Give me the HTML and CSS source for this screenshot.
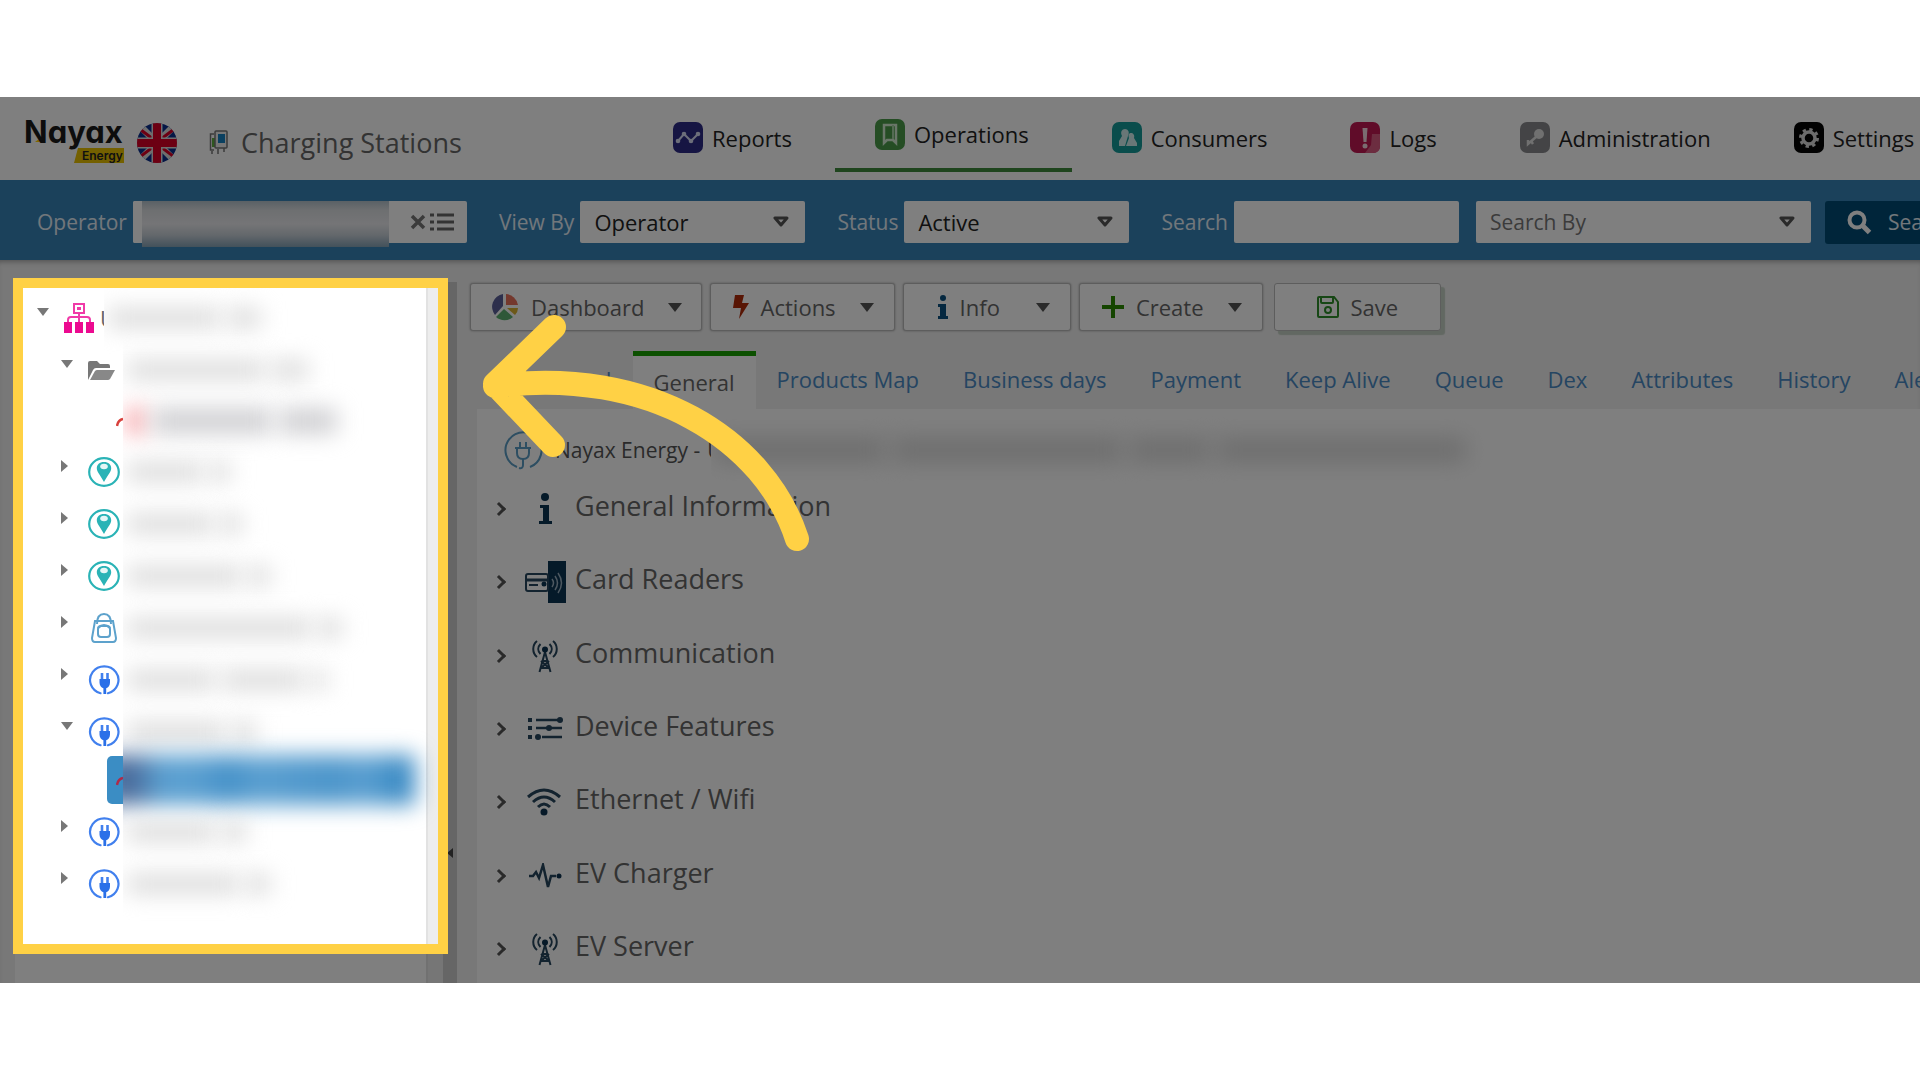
FILE: index.html
```html
<!DOCTYPE html>
<html lang="en">
<head>
  <meta charset="UTF-8">
  <title>Charging Stations</title>
  <link rel="stylesheet" href="styles.css">
</head>
<body>

  <!-- Shared icons -->
  <svg class="sprite" aria-hidden="true">
    <symbol id="pin" viewBox="0 0 32 30">
      <ellipse cx="16" cy="15" rx="14.8" ry="13.8" fill="none" stroke="#2ab3b6" stroke-width="2.2"/>
      <path d="M16 5c-4.500 0-7.200 2.600-7.200 6.200C8.800 15 13 19 16 25c3-6 7.200-10 7.200-13.800C23.200 7.600 20.500 5 16 5z" fill="#2ab3b6"/>
      <ellipse cx="16" cy="9.500" rx="3.800" ry="2.800" fill="#e4f6f6"/>
    </symbol>
    <symbol id="plug" viewBox="0 0 32 30">
      <path d="M12.500 28.200A14.200 13.700 0 1 1 20 28.200" fill="none" stroke="#4180ee" stroke-width="2.200" stroke-linecap="round"/>
      <path d="M11.500 14h10.500v3.500c0 3-1.600 4.800-3.800 5.800V29h-2.800v-5.700c-2.200-1-3.900-2.800-3.900-5.800z" fill="#2a70e8"/>
      <path d="M14 8v6M19.500 8v6" stroke="#4180ee" stroke-width="2.600"/>
    </symbol>
    <symbol id="tower" viewBox="0 0 28 34">
      <g fill="none" stroke="#26465e" stroke-width="2">
        <path d="M6 2C1 6 1 14 6 18M22 2c5 4 5 12 0 16"/>
        <path d="M9.500 5c-3 3-3 7 0 10M18.500 5c3 3 3 7 0 10"/>
        <path d="M14 13L8.500 33M14 13l5.500 20M11.500 22h5M10 29l8-7M18 29l-8-7M9.500 29h9"/>
      </g>
      <circle cx="14" cy="10.500" r="3" fill="#0d3350"/>
    </symbol>
  </svg>

  <div class="page">

    <header class="header">
      <div class="brand">
        <svg class="logo" width="104" height="50" viewBox="0 0 104 50" role="img" aria-label="Nayax Energy">
          <path d="M11 24l8-6 1 6z" fill="#ffcf00"/>
          <text class="logo-name" x="0" y="25">Nayax</text>
          <path d="M54 30h46v15H50z" fill="#e8c000"/>
          <text class="logo-sub" x="58" y="42">Energy</text>
        </svg>
        <svg class="flag" width="40" height="40" viewBox="0 0 40 40">
          <clipPath id="disc"><circle cx="20" cy="20" r="20"/></clipPath>
          <g clip-path="url(#disc)">
            <path d="M0 0h40v40H0z" fill="#0a2e8c"/>
            <path d="M0 0l40 40M40 0L0 40" stroke="#ddd" stroke-width="7"/>
            <path d="M0 4l16 12M40 4L24 16M0 36l16-12M40 36L24 24" stroke="#d80027" stroke-width="3"/>
            <path d="M20 0v40M0 20h40" stroke="#ddd" stroke-width="11"/>
            <path d="M20 0v40M0 20h40" stroke="#d80027" stroke-width="8"/>
          </g>
        </svg>
        <svg class="station-icon" width="20" height="25" viewBox="0 0 20 25">
          <path d="M5 4H1.500v16H5" fill="none" stroke="#777" stroke-width="1.500"/>
          <path d="M3 8h4v9H3z" fill="#5fae3f"/>
          <rect x="6" y="1" width="12" height="17" rx="1" fill="#eee" stroke="#777" stroke-width="1.500"/>
          <path d="M9 4h7v9H9z" fill="#1580c0"/>
          <path d="M3 21v3M9 19v5M15 18v4" stroke="#777" stroke-width="1.500"/>
        </svg>
        <h1>Charging Stations</h1>
      </div>
      <nav class="nav">
        <a href="#">
          <svg width="30" height="31" viewBox="0 0 30 31"><rect width="30" height="31" rx="7" fill="#2c2a86"/><path d="M5 19l6-7 7 7 7-7" fill="none" stroke="#d8dcf4" stroke-width="2"/><g fill="#d8dcf4"><circle cx="5" cy="19" r="2.300"/><circle cx="11" cy="12" r="2.300"/><circle cx="18" cy="19" r="2.300"/><circle cx="25" cy="12" r="2.300"/></g></svg>
          Reports
        </a>
        <a href="#" class="current">
          <svg width="30" height="31" viewBox="0 0 30 31"><rect width="30" height="31" rx="7" fill="#4a9a48"/><path d="M9 6h12v18l-3-3h-6l-3 3z" fill="none" stroke="#d4ecd2" stroke-width="2.500"/><path d="M18 6v14" stroke="#a8d6a6" stroke-width="2"/></svg>
          Operations
        </a>
        <a href="#">
          <svg width="30" height="31" viewBox="0 0 30 31"><rect width="30" height="31" rx="7" fill="#159a98"/><path d="M7 24V19l3-5c-2-4 0-7 3-7s5 3 3 7l-3 10zM14 24l3-8c-1-3 0-5 2-5s4 2 3 5l3 5v3z" fill="#d2efee"/></svg>
          Consumers
        </a>
        <a href="#">
          <svg width="30" height="31" viewBox="0 0 30 31"><rect width="30" height="31" rx="7" fill="#c01852"/><path d="M22 12h8v12q0 7-7 7h-8l6-8z" fill="#d85a80"/><path d="M12.500 6h5l-1 14h-3z" fill="#f6d8e2"/><circle cx="15" cy="24" r="2.500" fill="#f6d8e2"/></svg>
          Logs
        </a>
        <a href="#">
          <svg width="30" height="31" viewBox="0 0 30 31"><rect width="30" height="31" rx="7" fill="#88898c"/><circle cx="19" cy="12" r="5" fill="#e0e0e0"/><path d="M16 15l-8 7v-4M11 19l2 3" fill="none" stroke="#e0e0e0" stroke-width="2.500"/></svg>
          Administration
        </a>
        <a href="#">
          <svg width="30" height="31" viewBox="0 0 30 31"><rect width="30" height="31" rx="7" fill="#050505"/><circle cx="15" cy="16" r="6" fill="none" stroke="#d8d8d8" stroke-width="3.500"/><circle cx="15" cy="16" r="8.500" fill="none" stroke="#d8d8d8" stroke-width="3" stroke-dasharray="3.300 3.380"/></svg>
          Settings
        </a>
      </nav>
    </header>

    <form class="filters">
      <div class="field">
        <label for="operator">Operator</label>
        <div class="operator-box">
          <input type="text" id="operator">
          <span class="smudge"></span>
          <button type="button" aria-label="Clear"><svg width="16" height="16" viewBox="0 0 16 16"><path d="M2 2l12 12M14 2L2 14" stroke="#777" stroke-width="3.500"/></svg></button>
          <button type="button" aria-label="List"><svg width="24" height="18" viewBox="0 0 24 18"><path d="M0 2h4M0 9h4M0 16h4M7 2h17M7 9h17M7 16h17" stroke="#666" stroke-width="3"/></svg></button>
        </div>
      </div>
      <div class="field">
        <label for="viewby">View By</label>
        <select id="viewby"><option>Operator</option></select>
      </div>
      <div class="field">
        <label for="status">Status</label>
        <select id="status"><option>Active</option></select>
      </div>
      <div class="field search">
        <label for="search">Search</label>
        <input type="text" id="search">
      </div>
      <select class="search-by" aria-label="Search By"><option>Search By</option></select>
      <button type="button" class="search-btn">
        <svg width="25" height="25" viewBox="0 0 25 25"><circle cx="10" cy="10" r="7.500" fill="none" stroke="#fff" stroke-width="4"/><path d="M15.500 15.500l7 7" stroke="#fff" stroke-width="5"/></svg>
        Search
      </button>
    </form>

    <div class="workspace">

      <aside class="sidebar">
        <ul class="tree">
          <li class="root">
            <button class="toggle open" aria-label="Collapse"></button>
            <svg width="30" height="32" viewBox="0 0 30 32"><g fill="none" stroke="#f03aa8" stroke-width="2"><rect x="10" y="2" width="10" height="9"/><path d="M15 11v10M4 21v-3q0-3 3-3h16q3 0 3 3v3"/></g><path d="M13 5h4v3h-4z" fill="#f03aa8"/><path d="M0 20h8v11H0zM11 20h8v11h-8zM22 20h8v11h-8z" fill="#ec0a90"/></svg>
            <span class="initial">U</span>
            <span class="blurred"><i style="width:112px"></i><i style="width:34px"></i></span>
          </li>
          <li>
            <button class="toggle open" aria-label="Collapse"></button>
            <svg class="folder" width="32" height="30" viewBox="0 0 32 30"><path d="M0 20V3q0-2 2-2h7l3 3h8q2 0 2 2v2H8q-2 0-3 2z" fill="#777"/><path d="M2 20l5-9q1-1 2-1h18l-5 9q-1 1-2 1z" fill="#888"/></svg>
            <span class="blurred"><i style="width:138px"></i><i style="width:36px"></i></span>
          </li>
          <li class="leaf">
            <svg class="arc" width="7" height="12" viewBox="0 0 7 12"><path d="M1 11Q2 5 7 4" fill="none" stroke="#d8403c" stroke-width="2.500"/></svg>
            <span class="blurred dark"><i class="red" style="width:18px"></i><i style="width:120px"></i><i style="width:58px"></i></span>
          </li>
          <li>
            <button class="toggle" aria-label="Expand"></button>
            <svg width="32" height="30"><use href="#pin"/></svg>
            <span class="blurred"><i style="width:76px"></i><i style="width:20px"></i></span>
          </li>
          <li>
            <button class="toggle" aria-label="Expand"></button>
            <svg width="32" height="30"><use href="#pin"/></svg>
            <span class="blurred"><i style="width:86px"></i><i style="width:22px"></i></span>
          </li>
          <li>
            <button class="toggle" aria-label="Expand"></button>
            <svg width="32" height="30"><use href="#pin"/></svg>
            <span class="blurred"><i style="width:114px"></i><i style="width:22px"></i></span>
          </li>
          <li>
            <button class="toggle" aria-label="Expand"></button>
            <svg width="32" height="30" viewBox="0 0 32 30"><g fill="none" stroke="#5da2cc" stroke-width="2"><path d="M7 8h18l3 17q0 4-3 4H7q-3 0-3-4z"/><path d="M9 11Q9 1 16 1t7 10"/><rect x="10" y="13" width="12" height="11" rx="3"/><path d="M10 15Q16 9 22 15"/></g></svg>
            <span class="blurred"><i style="width:184px"></i><i style="width:24px"></i></span>
          </li>
          <li>
            <button class="toggle" aria-label="Expand"></button>
            <svg width="32" height="30"><use href="#plug"/></svg>
            <span class="blurred"><i style="width:88px"></i><i style="width:82px"></i><i style="width:16px"></i></span>
          </li>
          <li>
            <button class="toggle open" aria-label="Collapse"></button>
            <svg width="32" height="30"><use href="#plug"/></svg>
            <span class="blurred"><i style="width:98px"></i><i style="width:24px"></i></span>
          </li>
          <li class="leaf selected">
            <svg class="arc" width="7" height="12" viewBox="0 0 7 12"><path d="M1 11Q2 5 7 4" fill="none" stroke="#b02a48" stroke-width="2.500"/></svg>
            <span class="blurred"><i></i></span>
          </li>
          <li>
            <button class="toggle" aria-label="Expand"></button>
            <svg width="32" height="30"><use href="#plug"/></svg>
            <span class="blurred"><i style="width:88px"></i><i style="width:24px"></i></span>
          </li>
          <li>
            <button class="toggle" aria-label="Expand"></button>
            <svg width="32" height="30"><use href="#plug"/></svg>
            <span class="blurred"><i style="width:112px"></i><i style="width:24px"></i></span>
          </li>
        </ul>
        <div class="scrollbar"></div>
        <div class="splitter"></div>
        <div class="highlight"></div>
      </aside>

      <main class="main">
        <div class="toolbar">
          <button class="dashboard">
            <svg width="30" height="28" viewBox="0 0 30 28"><path d="M13 13V1A13 13 0 0 0 5 22z" fill="#5a5f98"/><path d="M16 12V1a13 13 0 0 1 12 11z" fill="#e8705a"/><path d="M14 16l9 8a13 13 0 0 1-17 0z" fill="#5cb070"/><path d="M17 15h11q0 4-3 7z" fill="#d8b030"/></svg>
            Dashboard <span class="caret"></span>
          </button>
          <button>
            <svg width="16" height="24" viewBox="0 0 16 24"><path d="M2 0h9L9 8h7L6 24l2-11H0z" fill="#b02a08"/></svg>
            Actions <span class="caret"></span>
          </button>
          <button class="info">
            <svg width="10" height="24" viewBox="0 0 10 24"><circle cx="5" cy="3" r="3" fill="#0a5080"/><path d="M0 9h8v12h2v3H0v-3h2v-9H0z" fill="#0a5080"/></svg>
            Info <span class="caret"></span>
          </button>
          <button>
            <svg width="22" height="22" viewBox="0 0 22 22"><path d="M11 0v22M0 11h22" stroke="#2a8a00" stroke-width="4"/></svg>
            Create <span class="caret"></span>
          </button>
          <button class="save">
            <svg width="22" height="22" viewBox="0 0 22 22"><g fill="none" stroke="#2f8f2a" stroke-width="2"><path d="M1 2q0-1 1-1h15l4 5v14q0 1-1 1H2q-1 0-1-1z"/><path d="M4 1v5q0 1 1 1h10q1 0 1-1V1"/><circle cx="11" cy="14" r="3"/></g></svg>
            Save
          </button>
        </div>

        <nav class="tabs">
          <a href="#">Dashboard</a>
          <a href="#" class="active">General</a>
          <a href="#">Products Map</a>
          <a href="#">Business days</a>
          <a href="#">Payment</a>
          <a href="#">Keep Alive</a>
          <a href="#">Queue</a>
          <a href="#">Dex</a>
          <a href="#">Attributes</a>
          <a href="#">History</a>
          <a href="#">Alerts</a>
        </nav>

        <section class="panel">
          <div class="machine">
            <svg width="40" height="40" viewBox="0 0 40 40"><g fill="none" stroke="#5a9cc4" stroke-width="2"><path d="M14 37A18 18 0 1 1 27 37M20 29v6q0 4-4 3"/><path d="M12 18h16M14 18v5q0 6 6 6t6-6v-5M17 18v-6M23 18v-6"/></g></svg>
            <span>Nayax Energy -</span>
            <span class="initial">U</span>
            <span class="blurred"><i style="width:170px"></i><i style="width:230px"></i><i style="width:80px"></i><i style="width:250px"></i></span>
          </div>
          <ul class="sections">
            <li>
              <span class="chevron"></span>
              <svg width="42" height="42" viewBox="0 0 42 42"><circle cx="21" cy="9" r="4" fill="#0a3452"/><path d="M16 17h9v16h3v3H15v-3h4V20h-3z" fill="#0a3452"/></svg>
              General Information
            </li>
            <li>
              <span class="chevron"></span>
              <svg width="42" height="42" viewBox="0 0 42 42"><path d="M24 0h18v42H24z" fill="#0a3452"/><g fill="none" stroke="#26465e" stroke-width="2"><rect x="2" y="13" width="22" height="17" rx="2"/><path d="M3 19h21" stroke-width="3"/><path d="M5 24h9"/></g><circle cx="20" cy="23" r="2.500" fill="#0a3452"/><path d="M28 18q3 4 0 8M31 15q5 7 0 14M34 12q7 10 0 20" fill="none" stroke="#9ab0c0" stroke-width="1.500"/></svg>
              Card Readers
            </li>
            <li>
              <span class="chevron"></span>
              <svg width="42" height="34"><use href="#tower"/></svg>
              Communication
            </li>
            <li>
              <span class="chevron"></span>
              <svg width="42" height="30" viewBox="0 0 42 30"><g stroke="#26465e" stroke-width="2.500"><path d="M12 6h26M12 14h26M18 23h20"/></g><g fill="#26465e"><path d="M4 4h4v4H4zM4 12h4v4H4zM4 21h4v4H4z"/><circle cx="36" cy="6" r="3"/><circle cx="25" cy="14" r="3"/><circle cx="14" cy="23" r="3"/></g></svg>
              Device Features
            </li>
            <li>
              <span class="chevron"></span>
              <svg width="42" height="30" viewBox="0 0 42 30"><g fill="none" stroke="#26465e" stroke-width="3"><path d="M4 10Q20-4 36 10M9 15q11-10 22 0M14 20q6-6 12 0"/></g><circle cx="20" cy="25" r="3.500" fill="#0d3350"/></svg>
              Ethernet / Wifi
            </li>
            <li>
              <span class="chevron"></span>
              <svg width="42" height="26" viewBox="0 0 42 26"><path d="M5 13h4l3-4 3 6 4-13 5 22 3-11h5" fill="none" stroke="#26465e" stroke-width="2.500"/><circle cx="35" cy="13" r="2.500" fill="#0d3350"/></svg>
              EV Charger
            </li>
            <li>
              <span class="chevron"></span>
              <svg width="42" height="34"><use href="#tower"/></svg>
              EV Server
            </li>
          </ul>
        </section>
      </main>
    </div>

    <!-- Arrow that points at the tree -->
    <svg class="pointer" width="340" height="250" viewBox="480 310 340 250">
      <path d="M797 539C765 440 650 366 495 386M554 327L495 384l58 61" fill="none" stroke="#ffd145" stroke-width="24" stroke-linecap="round" stroke-linejoin="round"/>
    </svg>
  </div>

</body>
</html>
```

FILE: styles.css
```css
* {
  box-sizing: border-box;
}

body {
  margin: 0;
  height: 100vh;
  padding: 97px 0;
  display: flex;
  flex-direction: column;
  background: #fff;
  color: #666;
  font-family: "Open Sans", "Noto Sans", sans-serif;
  font-size: 22px;
  line-height: 30px;
}

button, input, select {
  font: inherit;
  color: inherit;
}

a {
  text-decoration: none;
}

ul {
  margin: 0;
  padding: 0;
  list-style: none;
}

svg {
  flex-shrink: 0;
}

.sprite {
  display: none;
}

.page {
  flex: 1;
  min-height: 0;
  display: flex;
  flex-direction: column;
  position: relative;
  overflow: hidden;
  background: #f0f0f0;
}

/* Header */
.header {
  flex: 0 0 83px;
  display: flex;
  background: #fff;
  white-space: nowrap;
}

.brand {
  flex: 0 0 633px;
  display: flex;
  align-items: center;
  padding: 8px 0 0 24px;
}

.logo-name {
  font-family: Inter, sans-serif;
  font-size: 31px;
  font-weight: 700;
  font-feature-settings: "cv11";
  fill: #1a1a1a;
}

.logo-sub {
  font-family: Inter, sans-serif;
  font-size: 12px;
  font-weight: 600;
  fill: #222;
}

.flag {
  margin-left: 9px;
}

.station-icon {
  margin: 0 12px 0 32px;
}

h1 {
  margin: 0;
  font-size: 27px;
  line-height: 36px;
  font-weight: 400;
  color: #666;
}

.nav {
  display: flex;
  align-items: flex-start;
}

.nav a {
  display: flex;
  align-items: center;
  gap: 9px;
  height: 75px;
  padding: 6px 43px 0 40px;
  color: #222;
}

.nav a.current {
  padding-top: 3px;
  border-bottom: 4px solid #3f8a3c;
}

/* Filter bar */
.filters {
  flex: 0 0 80px;
  display: flex;
  align-items: center;
  padding: 4px 0 0 37px;
  background: #3682b6;
  color: #e4eef6;
  white-space: nowrap;
  overflow: hidden;
}

.field {
  display: flex;
  align-items: center;
  gap: 6px;
  margin-right: 32px;
  flex-shrink: 0;
}

.field label {
  font-size: 21px;
  font-weight: 500;
}

.field.search {
  margin-right: 17px;
}

.filters select,
.filters input {
  width: 225px;
  height: 42px;
  border: none;
  border-radius: 2px;
  padding: 0 14px;
  background: #fff;
  color: #222;
}

.filters select {
  appearance: none;
  flex-shrink: 0;
  background: #fff url("data:image/svg+xml,%3Csvg xmlns='http://www.w3.org/2000/svg' width='16' height='12'%3E%3Cpath d='M2 2h12l-6 7z' fill='none' stroke='%23555' stroke-width='3' stroke-linejoin='round'/%3E%3C/svg%3E") no-repeat right 16px center;
}

.filters .search-by {
  width: 335px;
  margin-right: 14px;
  font-size: 21px;
  color: #777;
}

.operator-box {
  position: relative;
  display: flex;
  align-items: center;
  gap: 4px;
  width: 334px;
  padding-right: 13px;
  background: #fff;
  border-radius: 2px;
}

.operator-box input {
  flex: 1;
  min-width: 0;
}

.operator-box button {
  display: flex;
  padding: 0;
  border: none;
  background: none;
}

.smudge {
  position: absolute;
  left: 9px;
  top: 0;
  width: 247px;
  height: 46px;
  background: linear-gradient(#b4c2cc, #dcdfe2 20%, #eaeaee 50%, #c8d0d8 74%, #86a2b6);
}

.search-btn {
  display: flex;
  align-items: center;
  gap: 16px;
  height: 43px;
  padding: 0 24px 0 22px;
  border: none;
  border-radius: 3px;
  background: #004b74;
  font-size: 21px;
}

/* Workspace */
.workspace {
  flex: 1;
  min-height: 0;
  display: flex;
  box-shadow: inset 0 5px 5px -3px #aaa;
}

.sidebar {
  position: relative;
  z-index: 1;
  flex: 0 0 457px;
  display: flex;
  padding: 22px 0 0 15px;
}

.tree {
  flex: 1;
  padding-top: 10px;
  background: #fff;
}

.tree li {
  display: flex;
  align-items: center;
  height: 52px;
  padding-left: 46px;
}

.tree .root {
  padding-left: 22px;
}

.tree .leaf {
  height: 50px;
  padding-left: 101px;
}

.toggle {
  width: 27px;
  height: 24px;
  margin-bottom: 12px;
  padding: 0;
  border: none;
  background: none;
}

.toggle::before {
  content: "";
  display: block;
  width: 0;
  border-left: 7px solid #777;
  border-top: 6px solid transparent;
  border-bottom: 6px solid transparent;
}

.toggle.open::before {
  border-top: 8px solid #777;
  border-left: 6px solid transparent;
  border-right: 6px solid transparent;
  border-bottom: none;
}

.folder {
  margin-top: 10px;
}

.initial {
  width: 4px;
  overflow: hidden;
}

.root .initial {
  margin-left: 6px;
}

/* Hidden names: soft bars, cut off sharply on the left */
.blurred {
  display: flex;
  align-items: center;
  gap: 7px;
  height: 40px;
  padding-left: 4px;
  clip-path: inset(-30px -30px -30px 0);
}

.tree li:not(.root):not(.leaf) .blurred {
  margin-left: 3px;
}

.blurred i {
  height: 20px;
  background: #dcdcdc;
  filter: blur(11px);
}

.blurred.dark i {
  height: 26px;
  background: #d0d0d3;
}

.blurred .red,
.blurred.dark .red {
  background: #f8a0a4;
}

.tree .selected {
  align-items: flex-start;
  margin-top: -2px;
  padding-left: 92px;
}

.selected .arc {
  width: 16px;
  height: 48px;
  padding-left: 9px;
  background: #3b8dc4;
  border-radius: 5px 0 0 5px;
}

.selected .blurred {
  height: 48px;
  padding: 0;
}

.selected .blurred i {
  width: 312px;
  height: 50px;
  margin-left: -20px;
  background: linear-gradient(90deg, #4a6c9c 10%, #5a9fd0 18%, #5a9fd0 30%, #4591c8 40%, #5a9fd0 50%, #4c95ca 74%, #5a9fd0 84%, #2f83c0);
}

.scrollbar {
  width: 17px;
  background: #ededed;
  border-left: 2px solid #e2e2e2;
}

.splitter {
  display: flex;
  flex-direction: column;
  justify-content: flex-end;
  align-items: center;
  width: 14px;
  padding-bottom: 125px;
  background: #ccc;
}

.splitter::before {
  content: "";
  border-right: 6px solid #444;
  border-top: 5px solid transparent;
  border-bottom: 5px solid transparent;
}

/* Spotlight: everything outside the frame is dimmed */
.highlight {
  position: absolute;
  inset: 18px 9px 29px 13px;
  border: 10px solid #ffd145;
  box-shadow: 0 0 0 3000px rgba(0, 0, 0, 0.5);
  pointer-events: none;
}

.pointer {
  position: absolute;
  left: 480px;
  top: 213px;
  z-index: 2;
}

/* Main area */
.main {
  flex: 1;
  min-width: 0;
  display: flex;
  flex-direction: column;
  padding: 23px 0 0 13px;
}

.toolbar {
  display: flex;
  gap: 8px;
}

.toolbar button {
  display: flex;
  align-items: center;
  gap: 12px;
  height: 48px;
  padding: 0 20px 0 22px;
  border: 1px solid #bbb;
  border-radius: 3px;
  background: #fff;
  box-shadow: 0 0 2px #999;
}

.toolbar .dashboard {
  gap: 11px;
  padding: 0 19px;
}

.toolbar .info {
  padding: 0 20px 0 34px;
}

.toolbar .info .caret {
  margin-left: 24px;
}

.toolbar .save {
  margin-left: 3px;
  padding: 0 42px;
  box-shadow: 4px 4px 1px #c4d0c4;
}

.caret {
  margin-left: 12px;
  border-top: 9px solid #555;
  border-left: 7px solid transparent;
  border-right: 7px solid transparent;
}

.tabs {
  display: flex;
  height: 58px;
  margin: 20px 0 0 7px;
  white-space: nowrap;
  overflow: hidden;
}

.tabs a {
  flex-shrink: 0;
  padding: 13px 21px 0;
  color: #4a8ac4;
}

.tabs .active {
  padding-top: 11px;
  border-top: 5px solid #18a000;
  background: #fff;
  color: #666;
}

.tabs .active ~ a {
  padding-right: 23px;
}

.panel {
  flex: 1;
  min-height: 0;
  display: flex;
  flex-direction: column;
  margin-left: 7px;
  background: #fff;
}

.machine {
  display: flex;
  align-items: center;
  height: 60px;
  padding: 22px 0 0 26px;
  font-size: 21px;
  color: #555;
  white-space: nowrap;
}

.machine svg {
  margin-right: 12px;
}

.machine .initial {
  margin-left: 7px;
}

.machine .blurred i {
  height: 24px;
}

.sections {
  flex: 1;
  display: grid;
  grid-auto-rows: 1fr;
}

.sections li {
  display: flex;
  align-items: center;
  padding-left: 17px;
  font-size: 27px;
  color: #666;
}

.sections svg {
  margin: 6px 9px 0 20px;
}

.chevron {
  width: 10px;
  height: 10px;
  margin-top: 6px;
  border-top: 3px solid #555;
  border-right: 3px solid #555;
  transform: rotate(45deg);
}
```
